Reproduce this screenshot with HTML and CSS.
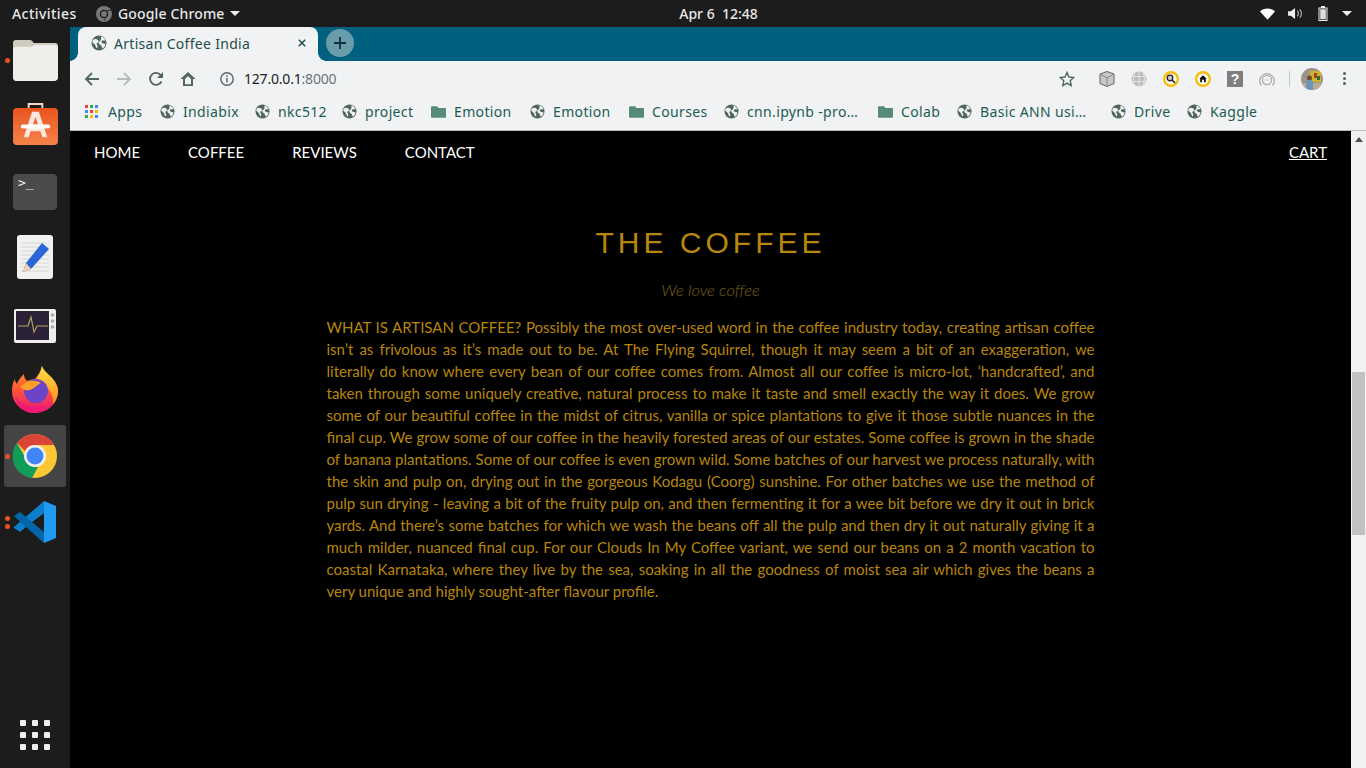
FILE: index.html
```html
<!DOCTYPE html>
<html lang="en">
<head>
<meta charset="utf-8">
<title>Artisan Coffee India</title>
<link rel="stylesheet" href="styles.css">
</head>
<body>
<svg class="defs" width="0" height="0" aria-hidden="true">
  <defs>
    <symbol id="globe" viewBox="0 0 16 16">
      <circle cx="8" cy="8" r="7.500" fill="#50665f"/>
      <path d="M2.500 4.500C4 3.500 5.500 3.800 7 5c1 1 .8 2.200-.5 2.700-1.200.4-1 1.500-.3 2.300.8 1 .5 2.500-.5 3.200-1-1.200-1-2.500-1.700-3.500C3.300 8.500 1.500 8 1.200 6.500c.2-.7.700-1.400 1.300-2z" fill="#f1f2f3"/>
      <path d="M9.500 1.200c2.500.5 4.300 2.300 5 4.300-1.200.2-2.500-.3-3.500.3-1 .6-.6 1.800.5 2.400 1 .5 2.300.4 3 .9-.3 2-1.500 3.700-3 4.600-.7-1.300-.4-2.500-1.500-3.400-1-.9-2.300-1-2.300-2.500 0-1.300 1.300-1.700 2-2.500.6-.9.500-2.600.3-4.100z" fill="#f1f2f3"/>
    </symbol>
    <symbol id="folder" viewBox="0 0 16 14">
      <path d="M1 1.500h5.500L8 3.200h6.800c.6 0 1.200.5 1.200 1.100v8.200c0 .7-.6 1.200-1.200 1.200H1.200C.5 13.700 0 13.200 0 12.500V2.500c0-.6.4-1 1-1z" fill="#568a79"/>
    </symbol>
    <linearGradient id="foxbody" x1="0" y1="0" x2="0" y2="1">
      <stop offset="0" stop-color="#ff9a1f"/>
      <stop offset=".55" stop-color="#ff4f3a"/>
      <stop offset="1" stop-color="#e3157f"/>
    </linearGradient>
    <linearGradient id="foxtail" x1="0" y1="0" x2="0" y2="1">
      <stop offset="0" stop-color="#ffe24a"/>
      <stop offset="1" stop-color="#ff8a1f"/>
    </linearGradient>
    <linearGradient id="storebg" x1="0" y1="0" x2="0" y2="1">
      <stop offset="0" stop-color="#e9541e"/>
      <stop offset="1" stop-color="#f6834a"/>
    </linearGradient>
  </defs>
</svg>

<header class="topbar">
  <div class="top-left">
    <span class="top-item">Activities</span>
    <span class="top-app">
      <svg class="app-ico" viewBox="0 0 16 16"><circle cx="8" cy="8" r="8" fill="#77797a"/><circle cx="8" cy="8" r="3.600" fill="none" stroke="#222" stroke-width="1.500"/><path d="M8 4.500h7M11 9l-3 6" stroke="#333" stroke-width="1"/></svg>
      <span>Google Chrome</span>
      <svg class="caret" viewBox="0 0 10 5"><path d="M0 0h10L5 5z" fill="#eee"/></svg>
    </span>
  </div>
  <div class="clock">Apr 6&nbsp;&nbsp;12:48</div>
  <div class="tray">
    <svg class="tray-wifi" viewBox="0 0 16 12"><path d="M0 3.200C4.500-.8 11.500-.8 16 3.200L8 12z" fill="#fff"/></svg>
    <svg class="tray-vol" viewBox="0 0 16 14"><path d="M0 4.500h3L7.500 1v12L3 9.500H0z" fill="#eee"/><path d="M10 4c1.500 1.500 1.500 4.500 0 6M12.500 2.500c2.500 2.500 2.500 6.500 0 9" fill="none" stroke="#bbb" stroke-width="1.200"/></svg>
    <svg class="tray-bat" viewBox="0 0 10 15"><path d="M3 0h4v1.500h2.500V15H.5V1.500H3z" fill="#eee"/><rect x="1.500" y="2.500" width="7" height="11.500" fill="#1c1c1c"/><rect x="2.200" y="3.200" width="5.600" height="10.100" fill="#ddd"/></svg>
    <svg class="tray-caret" viewBox="0 0 10 5"><path d="M0 0h10L5 5z" fill="#eee"/></svg>
  </div>
</header>

<div class="desktop">
  <aside class="dock">
    <div class="dock-slot">
      <span class="dots"><i></i></span>
      <svg class="ico-files" viewBox="0 0 46 42"><path d="M3 0h14c2 0 3 1 4 3h22c2 0 3 1 3 3v32c0 2-1 4-4 4H3c-2 0-3-2-3-4V3c0-2 1-3 3-3z" fill="#cfcbbf"/><path d="M0 10c0-2 1-3 3-3h14c3 0 4-2 7-2h19c2 0 3 1 3 3v30c0 2-1 4-4 4H3c-2 0-3-2-3-4z" fill="#efeeea"/></svg>
    </div>
    <div class="dock-slot">
      <svg class="ico-store" viewBox="0 0 46 44"><path d="M16 5V1h14v4" fill="none" stroke="#f5d5c5" stroke-width="2"/><rect y="5" width="46" height="38" rx="4" fill="url(#storebg)"/><path d="M19.500 9h7l8.500 26h-5l-2-6H18l-2 6h-5zM20.500 22h5L23 14z" fill="#fde8df"/><rect x="8" y="22" width="30" height="4" rx="2" fill="#fff"/></svg>
    </div>
    <div class="dock-slot">
      <div class="ico-term">&gt;_</div>
    </div>
    <div class="dock-slot">
      <svg class="ico-edit" viewBox="0 0 38 46"><rect width="36" height="44" x="1" rx="3" fill="#f1f1ef"/><path d="M5 8h28M5 12h28M5 16h28M5 20h28M5 24h28M5 28h28M5 32h28M5 36h28" stroke="#d5d5d5"/><path d="M26 8l7 6-18 20-8 3 3-9z" fill="#2a66d9"/><path d="M7 37l3-9 5 6z" fill="#f5cfa8"/></svg>
    </div>
    <div class="dock-slot">
      <svg class="ico-mon" viewBox="0 0 42 34"><rect width="42" height="34" rx="2" fill="#f0efec"/><rect x="2" y="2" width="33" height="29" fill="#2b2238"/><path d="M4 17h10l3-9 3 15 3-6h11" fill="none" stroke="#b7a15e" stroke-width="1.200"/><circle cx="38.500" cy="6" r="1.800" fill="#aaa"/><circle cx="38.500" cy="12" r="1.800" fill="#aaa"/><circle cx="38.500" cy="18" r="1.800" fill="#aaa"/></svg>
    </div>
    <div class="dock-slot">
      <svg class="ico-fox" viewBox="0 0 46 47"><path d="M30 0c1 4 5 7 9 11 4 4 7 9 7 14 0 12-10 22-23 22S0 37 0 25c0-5 1-9 3-12 0 2 1 4 2 5C6 14 9 11 12 8c0 3 1 5 3 7 2-1 5-2 8-2 3-4 6-8 7-13z" fill="url(#foxbody)"/><path d="M30 0c1 4 5 7 9 11 4 4 7 9 7 14 0 5-2 10-5 13 1-8-3-14-9-20-2-2-5-3-8-4 3-4 5-9 6-14z" fill="url(#foxtail)"/><circle cx="24" cy="25" r="12" fill="#6b45c6"/><path d="M12 18c5-4 12-4 17-1-4 2-6 5-11 7-5 1-9-1-10-4 1 0 3-1 4-2z" fill="#ff9f2a"/><path d="M3 30c5 9 17 14 30 9-3 5-8 8-12 8C12 47 5 39 3 30z" fill="#f01a75"/></svg>
    </div>
    <div class="dock-slot active">
      <span class="dots"><i></i></span>
      <svg class="ico-chrome" viewBox="0 0 44 44"><circle cx="22" cy="22" r="22" fill="#fdc834"/><path d="M22 0a22 22 0 0 1 19 11H22a11 11 0 0 0-10 6L4 9A22 22 0 0 1 22 0z" fill="#db4437"/><path d="M4 9l9 16a11 11 0 0 0 12 8l-6 11A22 22 0 0 1 4 9z" fill="#0f9d58"/><circle cx="22" cy="22" r="11" fill="#f1f1f1"/><circle cx="22" cy="22" r="8.500" fill="#4285f4"/></svg>
    </div>
    <div class="dock-slot">
      <span class="dots"><i></i><i></i></span>
      <svg class="ico-code" viewBox="0 0 44 42"><path d="M31 0l12 5v32l-12 5z" fill="#1f9cf0"/><path d="M31 0v12L14 25l-7 6-6-4v-1l30-26z" fill="#0c7ecb"/><path d="M1 15l6-4 24 20v11L14 27z" fill="#0065a9"/></svg>
    </div>
    <div class="dock-fill"></div>
    <div class="grid-btn"><i></i><i></i><i></i><i></i><i></i><i></i><i></i><i></i><i></i></div>
  </aside>

  <main class="window">
    <div class="tabstrip">
      <div class="tab">
        <svg class="globe16"><use href="#globe"/></svg>
        <span class="tab-title">Artisan Coffee India</span>
        <svg class="tab-x" viewBox="0 0 10 10"><path d="M1 1l8 8M9 1L1 9" stroke="#1f4a45" stroke-width="1.800"/></svg>
      </div>
      <div class="newtab">
        <svg viewBox="0 0 12 12"><path d="M6 0v12M0 6h12" stroke="#10303a" stroke-width="1.800"/></svg>
      </div>
    </div>

    <div class="toolbar">
      <svg class="tb-ico" viewBox="0 0 16 16"><path d="M15 8H2M8 2L2 8l6 6" fill="none" stroke="#50665f" stroke-width="1.800"/></svg>
      <svg class="tb-ico" viewBox="0 0 16 16"><path d="M1 8h13M8 2l6 6-6 6" fill="none" stroke="#b0bdb9" stroke-width="1.800"/></svg>
      <svg class="tb-ico" viewBox="0 0 16 16"><path d="M13.500 10.500A6 6 0 1 1 13 4.500" fill="none" stroke="#50665f" stroke-width="1.800"/><path d="M15 1v6H9z" fill="#50665f"/></svg>
      <svg class="tb-ico" viewBox="0 0 16 16"><path d="M8 1L0.500 8H3v7h10V8h2.500z M5 8l3-3 3 3v5.200H5z" fill="#50665f" fill-rule="evenodd"/></svg>
      <div class="omnibox">
        <svg class="info" viewBox="0 0 14 14"><circle cx="7" cy="7" r="6.200" fill="none" stroke="#5f6368" stroke-width="1.400"/><path d="M7 6v4.500M7 3.200v1.600" stroke="#5f6368" stroke-width="1.500"/></svg>
        <span class="url">127.0.0.1<span class="port">:8000</span></span>
        <svg class="star" viewBox="0 0 16 16"><path d="M8 1.500l2 4.500 4.800.5-3.600 3.200 1 4.800L8 12.100l-4.200 2.400 1-4.800L1.200 6.500 6 6z" fill="none" stroke="#50665f" stroke-width="1.400"/></svg>
      </div>
      <div class="exts">
        <svg class="ext" viewBox="0 0 16 16"><path d="M8 .5l7 2.500v9.500l-7 3-7-3V3z" fill="#c8c8c8" stroke="#666" stroke-width="1"/><path d="M8 7l7-4M8 7L1 3M8 7v8" stroke="#888" fill="none"/></svg>
        <svg class="ext" viewBox="0 0 16 16"><circle cx="8" cy="8" r="7.500" fill="#bcbcbc"/><path d="M.5 5.500h15M.5 10.500h15M8 .5v15M4 1.500c-2 4-2 9 0 13M12 1.500c2 4 2 9 0 13" stroke="#eee" fill="none" stroke-width=".8"/></svg>
        <svg class="ext" viewBox="0 0 16 16"><circle cx="8" cy="8" r="6.800" fill="#fff" stroke="#fbbc05" stroke-width="2.400"/><circle cx="7" cy="7" r="2.800" fill="#ccc" stroke="#222" stroke-width="1.300"/><path d="M9 9l3 3" stroke="#222" stroke-width="1.600"/></svg>
        <svg class="ext" viewBox="0 0 16 16"><circle cx="8" cy="8" r="6.800" fill="#fff" stroke="#fbbc05" stroke-width="2.400"/><path d="M8 4.200l3.800 3.600h-1v3.400H9V8.800H7v2.400H5.200V7.800h-1z" fill="#111"/></svg>
        <div class="ext-q">?</div>
        <svg class="ext" viewBox="0 0 16 16"><path d="M2.500 14.500A7.200 7.200 0 1 1 13.500 14.500" fill="none" stroke="#aaa" stroke-width="1.200"/><circle cx="8" cy="9" r="4.600" fill="none" stroke="#aaa" stroke-width="1.200"/><path d="M6 9h.8M7.700 9h.8M9.400 9h.8" stroke="#aaa"/></svg>
      </div>
      <span class="tb-sep"></span>
      <svg class="avatar" viewBox="0 0 22 22"><defs><clipPath id="avclip"><circle cx="11" cy="11" r="11"/></clipPath></defs><g clip-path="url(#avclip)"><rect width="22" height="22" fill="#9b9488"/><rect x="9" y="3" width="11" height="11" fill="#c9b52a"/><rect x="13" y="5" width="3" height="5" fill="#b13a2a"/><rect x="16" y="8" width="3" height="4" fill="#2f6e3a"/><rect y="15" width="22" height="7" fill="#b8ab9a"/><circle cx="8.500" cy="10" r="2.500" fill="#6b4a36"/><path d="M5 22v-7c0-2 1-3 3.500-3s3.500 1 3.500 3v7z" fill="#6d95ba"/></g></svg>
      <div class="kebab"><i></i><i></i><i></i></div>
    </div>

    <nav class="bookmarks">
      <span class="bm bm-apps"><span class="apps-grid"><i class="r"></i><i class="g"></i><i class="b"></i><i class="b"></i><i class="r"></i><i class="y"></i><i class="g"></i><i class="y"></i><i class="b"></i></span>Apps</span>
      <span class="bm w-indiabix"><svg class="bm-ico"><use href="#globe"/></svg>Indiabix</span>
      <span class="bm w-nkc"><svg class="bm-ico"><use href="#globe"/></svg>nkc512</span>
      <span class="bm w-project"><svg class="bm-ico"><use href="#globe"/></svg>project</span>
      <span class="bm w-emo1"><svg class="bm-ico"><use href="#folder"/></svg>Emotion</span>
      <span class="bm w-emo2"><svg class="bm-ico"><use href="#globe"/></svg>Emotion</span>
      <span class="bm w-courses"><svg class="bm-ico"><use href="#folder"/></svg>Courses</span>
      <span class="bm w-cnn"><svg class="bm-ico"><use href="#globe"/></svg>cnn.ipynb -pro…</span>
      <span class="bm w-colab"><svg class="bm-ico"><use href="#folder"/></svg>Colab</span>
      <span class="bm w-basic"><svg class="bm-ico"><use href="#globe"/></svg>Basic ANN usi…</span>
      <span class="bm w-drive"><svg class="bm-ico"><use href="#globe"/></svg>Drive</span>
      <span class="bm"><svg class="bm-ico"><use href="#globe"/></svg>Kaggle</span>
    </nav>

    <div class="viewport">
      <div class="page">
        <div class="site-nav">
          <div class="nav-links">
            <a>HOME</a><a>COFFEE</a><a>REVIEWS</a><a>CONTACT</a>
          </div>
          <a class="cart">CART</a>
        </div>
        <section class="content">
          <h1>THE COFFEE</h1>
          <p class="tagline">We love coffee</p>
          <p class="body-text">WHAT IS ARTISAN COFFEE? Possibly the most over-used word in the coffee industry today, creating artisan coffee isn’t as frivolous as it’s made out to be. At The Flying Squirrel, though it may seem a bit of an exaggeration, we literally do know where every bean of our coffee comes from. Almost all our coffee is micro-lot, ‘handcrafted’, and taken through some uniquely creative, natural process to make it taste and smell exactly the way it does. We grow some of our beautiful coffee in the midst of citrus, vanilla or spice plantations to give it those subtle nuances in the final cup. We grow some of our coffee in the heavily forested areas of our estates. Some coffee is grown in the shade of banana plantations. Some of our coffee is even grown wild. Some batches of our harvest we process naturally, with the skin and pulp on, drying out in the gorgeous Kodagu (Coorg) sunshine. For other batches we use the method of pulp sun drying - leaving a bit of the fruity pulp on, and then fermenting it for a wee bit before we dry it out in brick yards. And there’s some batches for which we wash the beans off all the pulp and then dry it out naturally giving it a much milder, nuanced final cup. For our Clouds In My Coffee variant, we send our beans on a 2 month vacation to coastal Karnataka, where they live by the sea, soaking in all the goodness of moist sea air which gives the beans a very unique and highly sought-after flavour profile.</p>
        </section>
      </div>
      <div class="scrollbar">
        <svg class="sb-arrow" viewBox="0 0 8 5"><path d="M4 0l4 5H0z" fill="#505050"/></svg>
        <div class="sb-track"><div class="sb-thumb"></div></div>
      </div>
    </div>
  </main>
</div>
</body>
</html>
```
FILE: styles.css
```css
* { box-sizing: border-box; }
html, body { margin: 0; padding: 0; height: 100%; overflow: hidden; }
body { width: 1366px; height: 768px; display: flex; flex-direction: column; background: #000; font-family: "Noto Sans", sans-serif; }
.defs { position: absolute; }

.topbar { height: 27px; flex: none; background: #1c1c1c; color: #e8e8e8; display: grid; grid-template-columns: 1fr auto 1fr; align-items: center; font-size: 14px; font-weight: 500; }
.top-left { display: flex; align-items: center; padding-left: 12px; }
.top-item { width: 84px; letter-spacing: .45px; }
.top-app { display: flex; align-items: center; letter-spacing: .15px; }
.app-ico { width: 16px; height: 16px; margin-right: 6px; }
.caret { width: 10px; height: 5px; margin-left: 5px; }
.clock { font-size: 14px; text-align: center; padding-left: 71px; }
.tray { display: flex; align-items: center; justify-content: flex-end; }
.tray-wifi { width: 15px; height: 12px; margin-right: 13px; }
.tray-vol { width: 15px; height: 13px; margin-right: 15px; }
.tray-bat { width: 10px; height: 15px; margin-right: 14px; }
.tray-caret { width: 10px; height: 5px; margin-right: 14px; }

.desktop { flex: 1; display: flex; min-height: 0; }
.dock { width: 70px; flex: none; background: #1c1c1c; display: flex; flex-direction: column; align-items: center; padding-top: 2px; }
.dock-slot { width: 62px; height: 62px; margin-bottom: 4px; display: flex; align-items: center; justify-content: center; position: relative; border-radius: 3px; }
.dock-slot.active { background: #454545; }
.dots { position: absolute; left: 1px; top: 0; bottom: 0; display: flex; flex-direction: column; justify-content: center; gap: 3px; }
.dots i { width: 5px; height: 5px; border-radius: 50%; background: #e9541e; display: block; }
.ico-files { width: 45px; height: 41px; }
.ico-store { width: 45px; height: 43px; margin-top: -3px; }
.ico-term { width: 44px; height: 36px; background: #4b4b4b; border-radius: 4px; color: #eee; font: 13px/15px "DejaVu Sans Mono", monospace; padding: 1px 0 0 5px; }
.ico-edit { width: 38px; height: 46px; }
.ico-mon { width: 42px; height: 34px; margin-top: 4px; }
.ico-fox { width: 46px; height: 47px; margin-top: -2px; }
.ico-chrome { width: 44px; height: 44px; }
.ico-code { width: 44px; height: 42px; }
.dock-fill { flex: 1; }
.grid-btn { display: grid; grid-template-columns: repeat(3, 6px); gap: 6px; margin-bottom: 18px; }
.grid-btn i { width: 6px; height: 6px; background: #eee; border-radius: 1px; display: block; }

.window { flex: 1; min-width: 0; display: flex; flex-direction: column; }
.tabstrip { height: 34px; flex: none; background: #006080; display: flex; align-items: flex-end; }
.tab { width: 240px; height: 34px; background: #f1f2f3; border-radius: 8px 8px 0 0; margin-left: 8px; display: flex; align-items: center; padding: 0 12px 2px 13px; color: #1d4f4a; font-size: 14px; position: relative; }
.tab::before, .tab::after { content: ""; position: absolute; bottom: 0; width: 8px; height: 8px; }
.tab::before { left: -8px; background: radial-gradient(circle at 0 0, #006080 7.500px, #f1f2f3 8px); }
.tab::after { right: -8px; background: radial-gradient(circle at 100% 0, #006080 7.500px, #f1f2f3 8px); }
.globe16 { width: 16px; height: 16px; flex: none; }
.tab-title { flex: 1; margin-left: 7px; letter-spacing: .3px; }
.tab-x { width: 8px; height: 8px; }
.newtab { width: 28px; height: 28px; border-radius: 50%; background: #6a9cac; margin: 0 0 4px 8px; display: flex; align-items: center; justify-content: center; }
.newtab svg { width: 12px; height: 12px; }

.toolbar { height: 35px; flex: none; background: #f1f2f3; display: flex; align-items: center; padding-left: 14px; }
.tb-ico { width: 16px; height: 16px; margin-right: 16px; }
.toolbar .tb-ico:nth-child(4) { margin-right: 0; }
.omnibox { width: 879px; height: 28px; display: flex; align-items: center; padding-left: 24px; color: #202124; font-size: 14px; }
.info { width: 14px; height: 14px; flex: none; }
.url { margin-left: 10px; flex: 1; letter-spacing: -.2px; }
.port { color: #6d7378; }
.star { width: 16px; height: 16px; }
.exts { display: flex; align-items: center; gap: 16px; margin-left: 24px; }
.ext { width: 16px; height: 16px; display: block; }
.ext-q { width: 16px; height: 16px; background: #7f7f7f; color: #fff; font: bold 14px/16px "Liberation Sans", sans-serif; text-align: center; }
.tb-sep { width: 1px; height: 16px; background: #c6c9cb; margin: 0 11px 0 14px; }
.avatar { width: 22px; height: 22px; flex: none; }
.kebab { display: flex; flex-direction: column; gap: 2px; margin-left: 20px; }
.kebab i { width: 3px; height: 3px; border-radius: 50%; background: #50665f; display: block; }

.bookmarks { height: 35px; flex: none; background: #f1f2f3; border-bottom: 1px solid #b9bcbd; display: flex; align-items: center; padding: 0 0 4px 15px; color: #1d5c53; font-size: 14px; letter-spacing: .35px; white-space: nowrap; }
.bm { display: flex; align-items: center; }
.bm-ico { width: 15px; height: 15px; margin-right: 8px; flex: none; }
.apps-grid { display: grid; grid-template-columns: repeat(3, 3px); gap: 2px; margin-right: 10px; width: 13px; }
.apps-grid i { width: 3px; height: 3px; display: block; }
.apps-grid .r { background: #ea4335; }
.apps-grid .g { background: #34a853; }
.apps-grid .b { background: #4285f4; }
.apps-grid .y { background: #fbbc05; }
.bm-apps { width: 75px; }
.w-indiabix { width: 95px; }
.w-nkc { width: 87px; }
.w-project { width: 89px; }
.w-emo1 { width: 99px; }
.w-emo2 { width: 99px; }
.w-courses { width: 95px; }
.w-cnn { width: 154px; }
.w-colab { width: 79px; }
.w-basic { width: 154px; }
.w-drive { width: 76px; }

.viewport { flex: 1; min-height: 0; display: flex; background: #000; }
.page { flex: 1; min-width: 0; color: #fff; font-family: Lato, sans-serif; }
.site-nav { height: 42px; display: flex; justify-content: space-between; align-items: center; padding: 0 24px; font-size: 15px; }
.nav-links { display: flex; gap: 48px; }
.cart { text-decoration: underline; }
.content { width: 768px; margin: 0 auto; color: #b8860b; }
h1 { margin: 50px 0 0; font: 400 30px/40px "Liberation Sans", sans-serif; letter-spacing: 4px; text-align: center; color: #b8860b; }
.tagline { margin: 16px 0 0; font-size: 16.500px; line-height: 22px; font-style: italic; font-weight: 300; text-align: center; color: #7a6315; }
.body-text { margin: 15px 0 0; font-size: 15px; line-height: 22px; text-align: justify; }

.scrollbar { width: 15px; flex: none; background: #f1f1f1; display: flex; flex-direction: column; align-items: center; }
.sb-arrow { width: 8px; height: 5px; margin-top: 6px; flex: none; }
.sb-track { flex: 1; width: 100%; padding-top: 230px; }
.sb-thumb { height: 163px; background: #c1c1c1; margin: 0 1px; width: 13px; }
```
